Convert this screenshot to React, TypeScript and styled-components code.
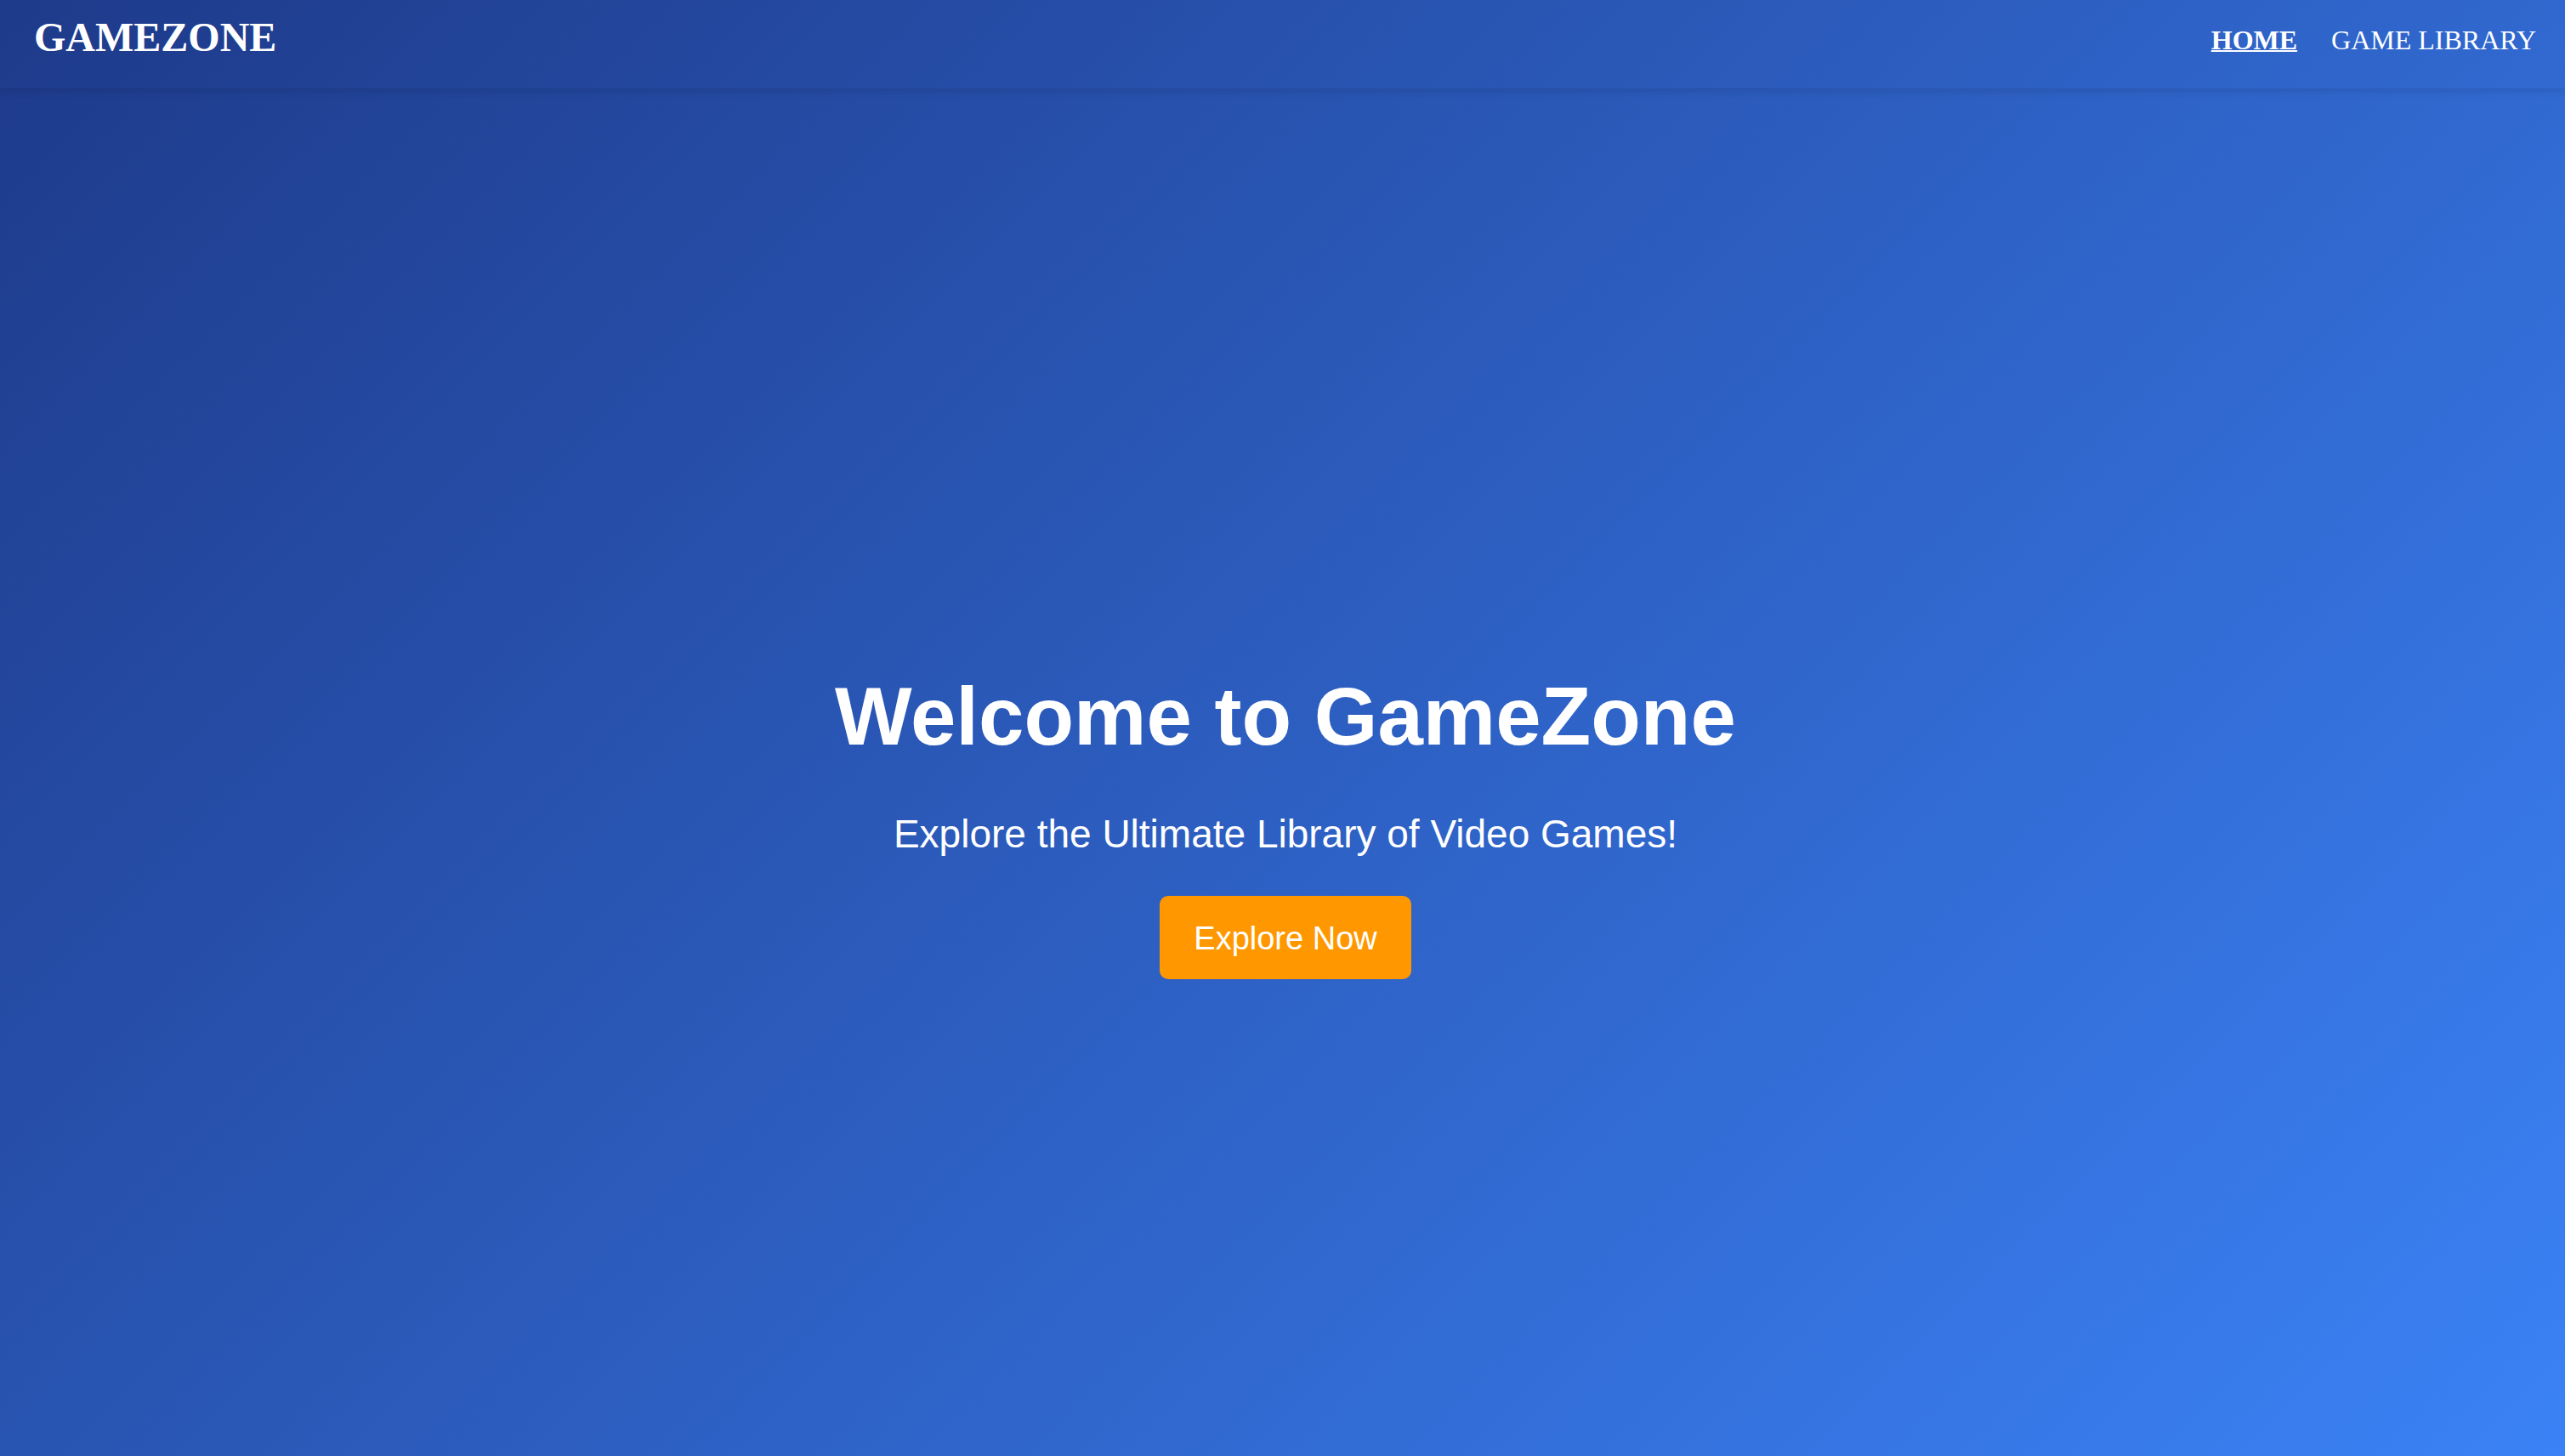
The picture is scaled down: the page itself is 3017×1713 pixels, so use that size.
import React from "react";
import styled, { createGlobalStyle } from "styled-components";

const GlobalStyle = createGlobalStyle`
  html, body {
    margin: 0;
    padding: 0;
  }
  body {
    font-family: "Liberation Sans", Arial, sans-serif;
    color: #ffffff;
  }
  * { box-sizing: border-box; }
`;

const Page = styled.div`
  min-height: 100vh;
  display: flex;
  flex-direction: column;
  background: linear-gradient(135deg, #1e3a8a 0%, #3b82f6 100%);
`;

const Header = styled.header`
  height: 104px;
  flex: 0 0 104px;
  display: flex;
  justify-content: space-between;
  align-items: flex-start;
  padding: 17px 34px 0 40px;
  box-shadow: 0 4px 8px rgba(0, 0, 0, 0.1);
  position: relative;
  z-index: 1;
`;

const Logo = styled.div`
  font-family: "Liberation Serif", "Times New Roman", serif;
  font-weight: 700;
  font-size: 48px;
  line-height: 53px;
  color: #ffffff;
`;

const Nav = styled.nav`
  display: flex;
  gap: 40px;
  padding-top: 13px;
`;

const NavLink = styled.a<{ $active?: boolean }>`
  font-family: "Liberation Serif", "Times New Roman", serif;
  font-size: 32px;
  line-height: 35px;
  color: #ffffff;
  font-weight: ${(p) => (p.$active ? 700 : 400)};
  text-decoration: ${(p) => (p.$active ? "underline" : "none")};
  text-decoration-thickness: 2px;
  cursor: pointer;
`;

const Hero = styled.main`
  flex: 1;
  display: flex;
  flex-direction: column;
  align-items: center;
  justify-content: center;
  padding: 122px 0 0 7px;
  text-align: center;
`;

const Title = styled.h1`
  margin: 0;
  font-family: "Liberation Sans", Arial, sans-serif;
  font-weight: 700;
  font-size: 96px;
  line-height: 110px;
  color: #ffffff;
`;

const Subtitle = styled.p`
  margin: 57px 0 0;
  font-family: "Liberation Sans", Arial, sans-serif;
  font-size: 46px;
  line-height: 53px;
  color: #ffffff;
`;

const CTA = styled.button`
  margin-top: 46px;
  padding: 28px 40px 26px;
  border: none;
  border-radius: 10px;
  background: #ff9800;
  color: #ffffff;
  font-family: "Liberation Sans", Arial, sans-serif;
  font-size: 38px;
  line-height: 44px;
  cursor: pointer;
`;

export default function App() {
  return (
    <>
      <GlobalStyle />
      <Page>
        <Header>
          <Logo>GAMEZONE</Logo>
          <Nav>
            <NavLink $active>HOME</NavLink>
            <NavLink>GAME LIBRARY</NavLink>
          </Nav>
        </Header>
        <Hero>
          <Title>Welcome to GameZone</Title>
          <Subtitle>Explore the Ultimate Library of Video Games!</Subtitle>
          <CTA>Explore Now</CTA>
        </Hero>
      </Page>
    </>
  );
}
